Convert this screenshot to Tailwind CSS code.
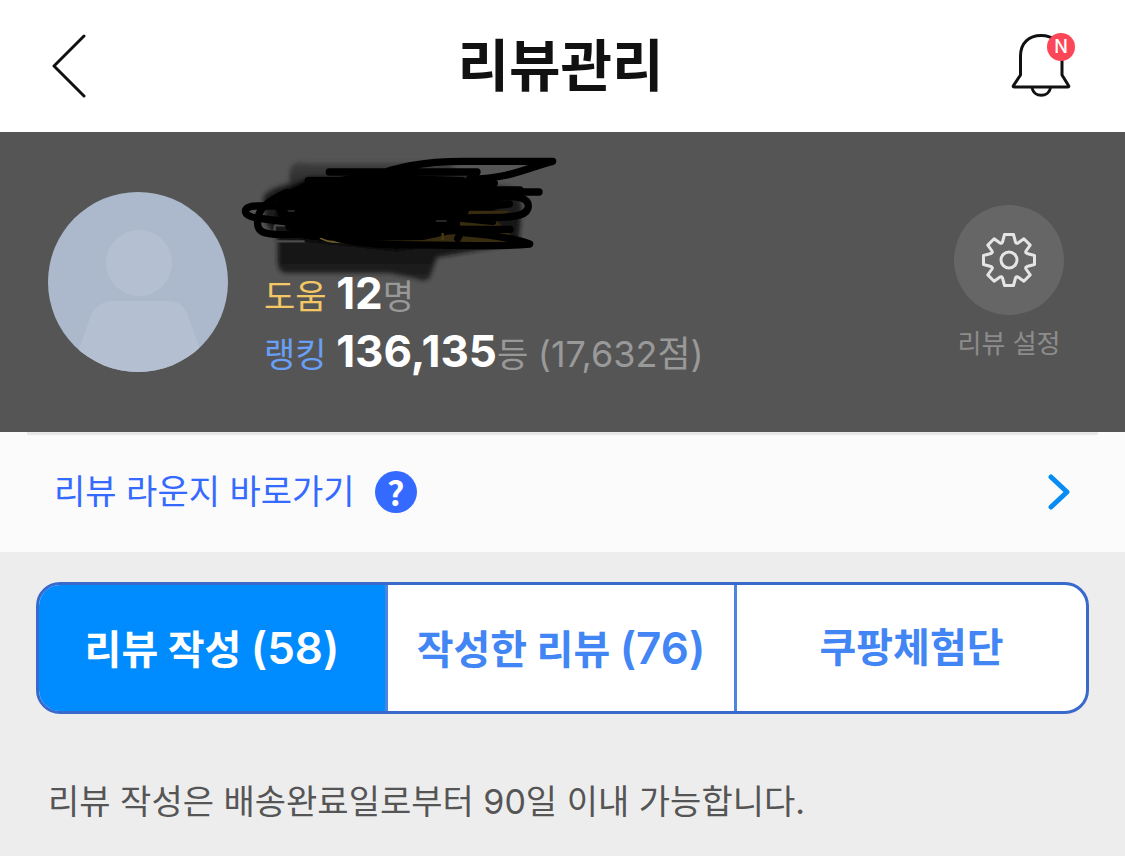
<!DOCTYPE html>
<html lang="ko">

<head>
    <meta charset="UTF-8" />
    <meta name="viewport" content="width=device-width, initial-scale=1.0" />
    <title>리뷰관리</title>
    <script src="https://cdn.jsdelivr.net/npm/@tailwindcss/browser@4"></script>
</head>

<body class="min-h-screen bg-[#ededed] font-[Inter,'Noto_Sans_CJK_KR',sans-serif]">

    <header class="flex h-[132px] items-center justify-between bg-white pr-[52px] pl-12">
        <a href="#" aria-label="뒤로" class="w-16">
            <svg class="h-16 w-10" viewBox="0 0 40 64" fill="none" stroke="#111" stroke-width="3" stroke-linecap="round" stroke-linejoin="round">
                <path d="M36 2 6 32l30 30" />
            </svg>
        </a>
        <h1 class="text-[56px] leading-none font-bold text-[#111]">리뷰관리</h1>
        <button type="button" aria-label="알림" class="relative flex w-16 justify-center">
            <svg class="h-[72px] w-16" viewBox="0 0 64 72" fill="none" stroke="#111" stroke-width="3" stroke-linejoin="round">
                <path d="M11.500 45V26C11.500 13 20 5.500 32 5.500S53 13 53 26v19l6.500 10.500q1 1.500-1 1.500h-53q-2 0-1-1.500z" />
                <path d="M23 58a9.500 9.500 0 0 0 18.500 0" />
            </svg>
            <span class="absolute top-[3px] right-[-2px] flex size-7 items-center justify-center rounded-full bg-[#fb4757] text-[18px] leading-none font-medium text-white">N</span>
        </button>
    </header>

    <section class="flex h-[300px] items-start bg-[#555] pt-[60px] pr-[60px] pl-12">
        <svg class="size-[180px] shrink-0 rounded-full bg-[#acb9cc]" viewBox="0 0 180 180" fill="#b4c0d2">
            <circle cx="91" cy="71" r="33" />
            <path d="M30 160l12-34q6-17 24-17h54q15 0 20 15l13 36v20H30z" />
        </svg>

        <div class="relative ml-9 grow pt-[74px] text-[34px] leading-[54px] whitespace-nowrap text-[#999]">
            <p><span class="text-[#f3c766]">도움</span> <strong class="text-[44px] font-bold text-white">12</strong>명</p>
            <p><span class="text-[#699ff5]">랭킹</span> <strong class="text-[44px] font-bold text-white">136,135</strong>등 <span class="text-[36px]">(17,632점)</span></p>

            <!-- 가려진 이름 -->
            <svg class="absolute top-[-52px] left-[-34px] h-[150px] w-[350px]" viewBox="0 0 1050 450" fill="none" aria-hidden="true">
                <defs>
                    <filter id="soft" x="-10%" y="-10%" width="120%" height="120%">
                        <feGaussianBlur stdDeviation="6" />
                    </filter>
                    <linearGradient id="shade" x1="0" y1="0" x2="0" y2="1">
                        <stop offset="0" stop-color="#404040" />
                        <stop offset="0.3" stop-color="#1c1c1c" />
                        <stop offset="0.8" stop-color="#151515" />
                        <stop offset="1" stop-color="#242424" />
                    </linearGradient>
                </defs>
                <g filter="url(#soft)">
                    <path d="M178 100q5-35 32-34l20 4h430l45 60 130 10q40 20 40 70l-10 100-245 42-20 60q-15 18-40 4l-80-17H165q-20-4-22-30v-70l-35-50-8-70q0-30 78-50z" fill="url(#shade)" />
                    <path d="M140 160l100-50h480l100 50-60 135-260 35-280-30-80-70z" fill="#000" />
                </g>
                <path d="M690 212h150l-40 30 60 60-60 15H420q-60 0-130-15l400-20z" fill="#372b10" />
                <path d="M134 256v48h90M134 256h80" stroke="#4b4b4b" stroke-width="7" />
                <path d="M155 165 235 125 400 100 700 112 730 180 710 230 655 235 650 285 580 300 420 303 250 285 170 270 150 215z" fill="#000" />
                <path d="M270 294q25 14 60 12" stroke="#6b5a30" stroke-width="5" />
                <path d="M638 278v22" stroke="#4a3a18" stroke-width="7" />
                <path d="M158 213h36M618 243h32" stroke="#333" stroke-width="4" />
                <g stroke="#000" stroke-width="22" stroke-linecap="round" stroke-linejoin="round">
                    <path d="M298 96h443M235 122h460M390 118C500 85 560 64 700 64h268c-80 20-120 50-250 54" />
                    <path d="M680 130h113M690 156h237M680 198q100 0 158-6M170 158C130 175 90 200 85 230c-12 50 20 52 70 54l420-5" />
                    <path d="M160 198H80c-45 0-45 30 0 36l110 14M155 185q-15 30 10 35" />
                    <path d="M690 150h180M800 173c70-10 95 5 95 25 0 30-45 33-85 34l-120 2 98 10" />
                    <path d="M640 268h200M700 278q130 10 199 34-80 8-229 4L500 314q-110 0-180-20M668 245c10 30 30 30 15 50" />
                </g>
            </svg>
        </div>

        <a href="#" class="mt-3 flex w-28 shrink-0 flex-col items-center text-[26px] text-[#8c8c8c]">
            <svg class="size-28" viewBox="-56 -56 112 112" fill="none" stroke="#e5e5e5" stroke-width="3" stroke-linejoin="round">
                <circle r="55" fill="#666" stroke="none" />
                <path d="M-4.5-25.5h9L6.5-18Q7.5-16 9-17l5.9-4.2 6.3 6.3L17-9Q16-7.5 18-6.5l7.500 2v9L18 6.5Q16 7.5 17 9l4.2 5.9-6.3 6.3L9 17Q7.5 16 6.5 18l-2 7.5h-9L-6.5 18Q-7.5 16-9 17l-5.9 4.2-6.3-6.3L-17 9Q-16 7.5-18 6.5l-7.5-2v-9l7.5-2Q-16-7.5-17-9l-4.2-5.9 6.3-6.3L-9-17Q-7.5-16-6.5-18z" />
                <circle r="8" />
            </svg>
            <span class="mt-2 leading-10 whitespace-nowrap">리뷰 설정</span>
        </a>
    </section>

    <section class="bg-[#fbfbfb]">
        <div class="mx-[27px] h-[3px] bg-[#e8e8e8]"></div>
        <a href="#" class="flex h-[117px] items-center px-[54px] pb-1 text-[34px] text-[#346aff]">
            <span>리뷰 라운지 바로가기</span>
            <span class="ml-5 flex size-[42px] items-center justify-center rounded-full bg-[#346aff] font-['Noto_Sans_CJK_KR',sans-serif] text-[34px] leading-none font-bold text-white">?</span>
            <svg class="ml-auto h-10 w-6" viewBox="0 0 24 40" fill="none" stroke="#068cf5" stroke-width="5" stroke-linecap="round" stroke-linejoin="round">
                <path d="M4 5l16 15L4 35" />
            </svg>
        </a>
    </section>

    <main class="px-9 pt-[30px]">
        <nav class="grid h-[132px] grid-cols-3 divide-x-3 divide-[#4a86e0] overflow-hidden rounded-3xl border-3 border-[#3869cb] bg-white text-[40px] font-bold whitespace-nowrap text-[#4285f4]">
            <button type="button" class="bg-[#008cff] text-white">리뷰 작성 <span class="text-[44px] font-semibold">(58)</span></button>
            <button type="button">작성한 리뷰 <span class="text-[44px] font-semibold">(76)</span></button>
            <button type="button">쿠팡체험단</button>
        </nav>
        <p class="mt-16 px-3 text-[34px] leading-[48px] text-[#555]">리뷰 작성은 배송완료일로부터 90일 이내 가능합니다.</p>
    </main>

</body>

</html>
